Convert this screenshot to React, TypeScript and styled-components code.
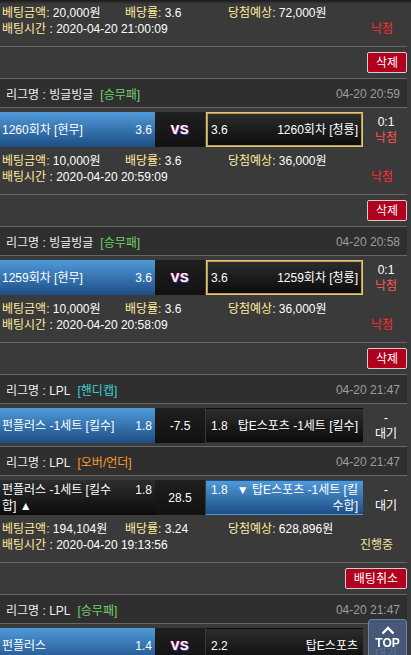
import React from 'react'
import styled, { createGlobalStyle } from 'styled-components'

type Tone = 'blue' | 'dark' | 'gold'

interface Game {
    league: string
    type: string
    typeColor: string
    date: string
    home: string
    homeOdds: string
    homeTone: Tone
    mid: string
    away: string
    awayOdds: string
    awayTone: Tone
    score: string
    result: string
    resultColor: string
}

interface Bet {
    id: number
    games: Game[]
    amount: string
    rate: string
    expected: string
    time: string
    status: string
    statusColor: string
    action: string
}

const GREEN = '#6fcf6a'
const LOSE = '#ff5656'

// team names keep the line breaks the site shows ("\n")
const bets: Bet[] = [
    {
        id: 0, games: [], amount: '20,000원', rate: '3.6', expected: '72,000원',
        time: '2020-04-20 21:00:09', status: '낙첨', statusColor: '#ff2b2b', action: '삭제'
    },
    {
        id: 1,
        games: [{
            league: '빙글빙글', type: '승무패', typeColor: GREEN, date: '04-20 20:59',
            home: '1260회차 [현무]', homeOdds: '3.6', homeTone: 'blue', mid: 'VS',
            away: '1260회차 [청룡]', awayOdds: '3.6', awayTone: 'gold',
            score: '0:1', result: '낙첨', resultColor: LOSE
        }],
        amount: '10,000원', rate: '3.6', expected: '36,000원',
        time: '2020-04-20 20:59:09', status: '낙첨', statusColor: '#ff2b2b', action: '삭제'
    },
    {
        id: 2,
        games: [{
            league: '빙글빙글', type: '승무패', typeColor: GREEN, date: '04-20 20:58',
            home: '1259회차 [현무]', homeOdds: '3.6', homeTone: 'blue', mid: 'VS',
            away: '1259회차 [청룡]', awayOdds: '3.6', awayTone: 'gold',
            score: '0:1', result: '낙첨', resultColor: LOSE
        }],
        amount: '10,000원', rate: '3.6', expected: '36,000원',
        time: '2020-04-20 20:58:09', status: '낙첨', statusColor: '#ff2b2b', action: '삭제'
    },
    {
        id: 3,
        games: [
            {
                league: 'LPL', type: '핸디캡', typeColor: '#3fd0d0', date: '04-20 21:47',
                home: '펀플러스 -1세트 [킬수]', homeOdds: '1.8', homeTone: 'blue', mid: '-7.5',
                away: '탑E스포츠 -1세트 [킬수]', awayOdds: '1.8', awayTone: 'dark',
                score: '-', result: '대기', resultColor: '#ffffff'
            },
            {
                league: 'LPL', type: '오버/언더', typeColor: '#ff9a2e', date: '04-20 21:47',
                home: '펀플러스 -1세트 [킬수\n합] ▲', homeOdds: '1.8', homeTone: 'dark', mid: '28.5',
                away: '▼ 탑E스포츠 -1세트 [킬\n수합]', awayOdds: '1.8', awayTone: 'blue',
                score: '-', result: '대기', resultColor: '#ffffff'
            }
        ],
        amount: '194,104원', rate: '3.24', expected: '628,896원',
        time: '2020-04-20 19:13:56', status: '진행중', statusColor: '#f3e4a0', action: '배팅취소'
    },
    {
        id: 4,
        games: [{
            league: 'LPL', type: '승무패', typeColor: GREEN, date: '04-20 21:47',
            home: '펀플러스', homeOdds: '1.4', homeTone: 'blue', mid: 'VS',
            away: '탑E스포츠', awayOdds: '2.2', awayTone: 'dark',
            score: '-', result: '대기', resultColor: '#ffffff'
        }],
        amount: '10,000원', rate: '1.4', expected: '14,000원',
        time: '2020-04-20 21:40:12', status: '진행중', statusColor: '#f3e4a0', action: '배팅취소'
    }
]

export default function App() {
    return (
        <Page>
            <GlobalStyle />
            <List>
                {bets.map(bet => (
                    <div key={bet.id}>
                        {bet.games.map((game, i) => (
                            <GameBlock key={i}>
                                <LeagueHeader>
                                    <span>
                                        리그명 : {game.league}
                                        <TypeTag $color={game.typeColor}>[{game.type}]</TypeTag>
                                    </span>
                                    <DateText>{game.date}</DateText>
                                </LeagueHeader>
                                <MatchRow>
                                    <TeamBox $tone={game.homeTone} $width={155}>
                                        <TeamInner>
                                            <TeamName>{game.home}</TeamName>
                                            <Odds $side="right">{game.homeOdds}</Odds>
                                        </TeamInner>
                                    </TeamBox>
                                    <MidBox>
                                        {game.mid === 'VS' ? <Vs>VS</Vs> : game.mid}
                                    </MidBox>
                                    <TeamBox $tone={game.awayTone} $width={157} $away>
                                        <TeamInner>
                                            <Odds $side="left">{game.awayOdds}</Odds>
                                            <TeamName $right>{game.away}</TeamName>
                                        </TeamInner>
                                    </TeamBox>
                                    <ResultCol>
                                        <div>{game.score}</div>
                                        <ResultText $color={game.resultColor}>{game.result}</ResultText>
                                    </ResultCol>
                                </MatchRow>
                            </GameBlock>
                        ))}
                        <Info>
                            <div><Label>베팅금액:</Label> {bet.amount}</div>
                            <div><Label>배당률:</Label> {bet.rate}</div>
                            <div><Label>당첨예상:</Label> {bet.expected}</div>
                            <TimeCell><Label>배팅시간</Label> : {bet.time}</TimeCell>
                            <Status $color={bet.statusColor}>{bet.status}</Status>
                        </Info>
                        <ActionBar>
                            <RedButton>{bet.action}</RedButton>
                        </ActionBar>
                    </div>
                ))}
            </List>
            <TopButton>
                <svg width="14" height="9" viewBox="0 0 14 9">
                    <polyline points="1.5,7.5 7,2 12.5,7.5" fill="none" stroke="#fff" strokeWidth="2.4" />
                </svg>
                <span>TOP</span>
            </TopButton>
        </Page>
    )
}

const GlobalStyle = createGlobalStyle`
    html, body{
        margin: 0;
        padding: 0;
        background: #3a3a3a;
    }
    body{
        font-family: "Liberation Sans", "Noto Sans CJK KR", sans-serif;
        font-size: 12px;
        color: #ffffff;
    }
`

const Page = styled.div`
    background: linear-gradient(#1a1a1a 0, #3a3a3a 4px);
    padding-top: 2px;
    min-height: 100vh;
`

const List = styled.div`
    width: 407px;
`

const LeagueHeader = styled.div`
    display: flex;
    align-items: center;
    justify-content: space-between;
    height: 27px;
    padding: 1px 7px 0 6px;
    background: #2f2f2f;
    color: #eeeeee;
    border-bottom: 1px solid #666666;
`

const GameBlock = styled.div`
    & + & ${LeagueHeader}{
        border-top: 1px solid #666666;
    }
`

const TypeTag = styled.span<{ $color: string }>`
    color: ${p => p.$color};
    margin-left: 7px;
`

const DateText = styled.span`
    color: #9c9c9c;
`

const MatchRow = styled.div`
    display: flex;
    padding: 4px 0 3px;
`

const TeamBox = styled.div<{ $tone: Tone; $width: number; $away?: boolean }>`
    box-sizing: border-box;
    width: ${p => p.$width}px;
    height: 35px;
    display: flex;
    align-items: center;
    margin-left: ${p => p.$away ? '1px' : '0'};
    padding: ${p => p.$away ? '0 4px' : '0 3px 0 2px'};
    border: ${p => p.$away ? '1px solid' : '0 solid'};
    border-color: ${p => p.$tone === 'gold' ? '#e6c473' : 'transparent'};
    box-shadow: ${p => p.$tone === 'gold' ? 'inset 0 0 0 1px #b89a52' : 'none'};
    background: ${p => p.$tone === 'blue'
        ? 'linear-gradient(#509ad9, #1d4e86)'
        : 'linear-gradient(#2d2d2d, #0b0b0b)'};
`

const TeamInner = styled.div`
    display: flex;
    align-items: flex-start;
    width: 100%;
    line-height: 16px;
`

const TeamName = styled.div<{ $right?: boolean }>`
    flex: 1;
    white-space: pre;
    text-align: ${p => p.$right ? 'right' : 'left'};
`

const Odds = styled.div<{ $side: 'left' | 'right' }>`
    flex: none;
    ${p => p.$side === 'right' ? 'margin-left: 4px;' : 'margin-right: 2px;'}
`

const MidBox = styled.div`
    width: 50px;
    height: 35px;
    display: flex;
    align-items: center;
    justify-content: center;
    background: linear-gradient(#1f1f1f, #111111);
`

const Vs = styled.span`
    font-weight: bold;
    font-size: 13px;
    letter-spacing: 0.5px;
    text-shadow: -1px 0 #e2222c, 1px 1px #2a3ae6;
`

const ResultCol = styled.div`
    flex: 1;
    display: flex;
    flex-direction: column;
    align-items: center;
    justify-content: center;
    line-height: 16px;
    padding-left: 2px;
`

const ResultText = styled.div<{ $color: string }>`
    color: ${p => p.$color};
`

const Info = styled.div`
    display: grid;
    grid-template-columns: 123px 103px 1fr auto;
    grid-auto-rows: 16px;
    line-height: 16px;
    padding: 3px 14px 9px 2px;
    white-space: nowrap;
`

const Label = styled.span`
    color: #ffeb9c;
`

const TimeCell = styled.div`
    grid-column: 1 / 4;
`

const Status = styled.div<{ $color: string }>`
    grid-column: 4;
    text-align: right;
    color: ${p => p.$color};
`

const ActionBar = styled.div`
    display: flex;
    justify-content: flex-end;
    padding: 5px 0;
    border-top: 1px solid #666666;
    border-bottom: 1px solid #666666;
`

const RedButton = styled.button`
    box-sizing: border-box;
    height: 21px;
    padding: 0 8px;
    border: 1px solid #cfcfcf;
    border-radius: 2px;
    background: #b0001d;
    color: #ffffff;
    font-family: inherit;
    font-size: 12px;
    line-height: 18px;
    cursor: pointer;
`

const TopButton = styled.div`
    position: fixed;
    top: 619px;
    right: 4px;
    width: 39px;
    height: 42px;
    box-sizing: border-box;
    border: 1px solid rgba(130, 150, 185, 0.7);
    border-radius: 4px;
    background: rgba(72, 92, 128, 0.9);
    display: flex;
    flex-direction: column;
    align-items: center;
    padding-top: 6px;
    color: #ffffff;
    font-weight: bold;
    font-size: 12px;
    line-height: 14px;

    span{
        margin-top: 1px;
    }
`
